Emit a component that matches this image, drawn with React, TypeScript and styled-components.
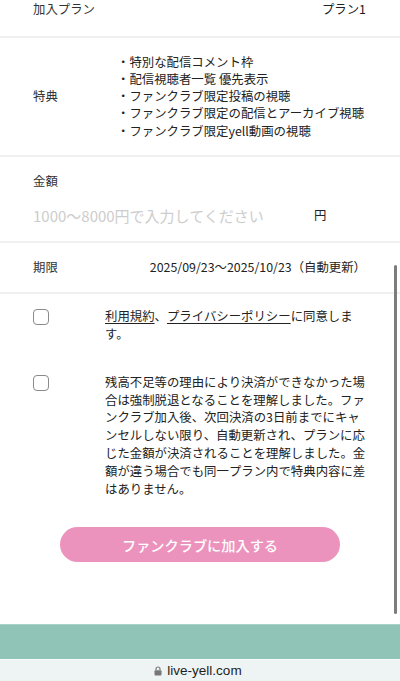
import React from "react";
import styled, { createGlobalStyle } from "styled-components";

const GlobalStyle = createGlobalStyle`
  html, body {
    margin: 0;
    padding: 0;
    background: #ffffff;
  }
  body {
    font-family: "Noto Sans CJK JP", "Noto Sans", sans-serif;
    color: #333333;
    -webkit-font-smoothing: antialiased;
  }
`;

const benefits = [
  "・特別な配信コメント枠",
  "・配信視聴者一覧 優先表示",
  "・ファンクラブ限定投稿の視聴",
  "・ファンクラブ限定の配信とアーカイブ視聴",
  "・ファンクラブ限定yell動画の視聴",
];

const Screen = styled.div`
  position: relative;
  width: 400px;
  height: 681px;
  overflow: hidden;
  display: flex;
  flex-direction: column;
  background: #fff;
`;

const Content = styled.div`
  flex: 1;
  margin-top: -16px;
  display: flex;
  flex-direction: column;
`;

const Row = styled.div<{ $pad?: number }>`
  display: flex;
  align-items: center;
  justify-content: space-between;
  padding: ${(p) => p.$pad ?? 17}px 34px ${(p) => p.$pad ?? 17}px 33px;
  border-bottom: 2px solid #f0f0f0;
  font-size: 12.4px;
  line-height: 17.6px;
`;

const Label = styled.div`
  color: #333;
  white-space: nowrap;
`;

const Value = styled.div`
  color: #222;
  white-space: nowrap;
  text-align: right;
`;

const BenefitRow = styled.div`
  display: grid;
  grid-template-columns: 84px 1fr;
  align-items: center;
  padding: 16px 20px 15px 33px;
  border-bottom: 2px solid #f0f0f0;
  font-size: 12.4px;
  line-height: 17.3px;
`;

const BenefitList = styled.ul`
  list-style: none;
  margin: 0;
  padding: 0;
  color: #222;
  white-space: nowrap;
`;

const AmountRow = styled.div`
  display: flex;
  flex-direction: column;
  padding: 16px 34px 10px 33px;
  border-bottom: 2px solid #f0f0f0;
  font-size: 12.4px;
  line-height: 17.6px;
`;

const InputLine = styled.div`
  display: flex;
  align-items: center;
  height: 30px;
  margin-top: 10px;
`;

const AmountInput = styled.input`
  flex: 1;
  min-width: 0;
  border: none;
  outline: none;
  padding: 0;
  background: transparent;
  font-family: "Noto Sans CJK JP", "Noto Sans", sans-serif;
  font-size: 15px;
  color: #222;
  &::placeholder {
    color: #cdcdcd;
  }
`;

const Unit = styled.span`
  width: 52px;
  color: #222;
`;

const Agreements = styled.div`
  display: flex;
  flex-direction: column;
  gap: 30px;
  padding: 14px 33px 0 33px;
`;

const CheckItem = styled.label`
  display: grid;
  grid-template-columns: 16px 262px;
  column-gap: 56px;
  align-items: start;
  font-size: 12.4px;
  line-height: 17.8px;
  color: #222;
`;

const Box = styled.span`
  width: 16px;
  height: 16px;
  margin-top: 1px;
  box-sizing: border-box;
  border: 1.5px solid #8a8a8a;
  border-radius: 4px;
  background: #fff;
`;

const Link = styled.span`
  text-decoration: underline;
  text-underline-offset: 2px;
`;

const ButtonWrap = styled.div`
  display: flex;
  justify-content: center;
  padding-top: 29px;
`;

const JoinButton = styled.button`
  width: 280px;
  height: 35px;
  border: none;
  border-radius: 18px;
  background: #ec93bd;
  color: #fff;
  font-family: "Noto Sans CJK JP", "Noto Sans", sans-serif;
  font-size: 14.2px;
  font-weight: 500;
  letter-spacing: 0;
  cursor: pointer;
`;

const Footer = styled.div`
  height: 34px;
  background: #8fc4b6;
  border-top: 1px solid #a8d2c7;
`;

const UrlBar = styled.div`
  height: 21px;
  display: flex;
  align-items: center;
  justify-content: center;
  gap: 5px;
  background: #eef4f4;
  border-top: 1px solid #f6fafa;
  font-family: "Liberation Sans", Arial, sans-serif;
  font-size: 13.5px;
  color: #1d1d1d;
  padding-right: 4px;
`;

const ScrollThumb = styled.div`
  position: absolute;
  right: 3px;
  top: 265px;
  width: 3px;
  height: 349px;
  border-radius: 2px;
  background: #7c7c7c;
`;

function Lock() {
  return (
    <svg width="8" height="10" viewBox="0 0 8 10" aria-hidden="true">
      <path
        d="M2 4.2V3a2 2 0 0 1 4 0v1.2"
        fill="none"
        stroke="#777"
        strokeWidth="1.2"
      />
      <rect x="0.5" y="4.2" width="7" height="5.3" rx="1" fill="#777" />
    </svg>
  );
}

export default function App() {
  return (
    <Screen>
      <GlobalStyle />
      <Content>
        <Row $pad={17}>
          <Label>加入プラン</Label>
          <Value>プラン1</Value>
        </Row>

        <BenefitRow>
          <Label>特典</Label>
          <BenefitList>
            {benefits.map((b) => (
              <li key={b}>{b}</li>
            ))}
          </BenefitList>
        </BenefitRow>

        <AmountRow>
          <Label>金額</Label>
          <InputLine>
            <AmountInput placeholder="1000〜8000円で入力してください" />
            <Unit>円</Unit>
          </InputLine>
        </AmountRow>

        <Row $pad={16}>
          <Label>期限</Label>
          <Value>2025/09/23〜2025/10/23（自動更新）</Value>
        </Row>

        <Agreements>
          <CheckItem>
            <Box />
            <span>
              <Link>利用規約</Link>、<Link>プライバシーポリシー</Link>
              に同意します。
            </span>
          </CheckItem>
          <CheckItem>
            <Box />
            <span>
              残高不足等の理由により決済ができなかった場合は強制脱退となることを理解しました。ファンクラブ加入後、次回決済の3日前までにキャンセルしない限り、自動更新され、プランに応じた金額が決済されることを理解しました。金額が違う場合でも同一プラン内で特典内容に差はありません。
            </span>
          </CheckItem>
        </Agreements>

        <ButtonWrap>
          <JoinButton>ファンクラブに加入する</JoinButton>
        </ButtonWrap>
      </Content>
      <Footer />
      <UrlBar>
        <Lock />
        <span>live-yell.com</span>
      </UrlBar>
      <ScrollThumb />
    </Screen>
  );
}
